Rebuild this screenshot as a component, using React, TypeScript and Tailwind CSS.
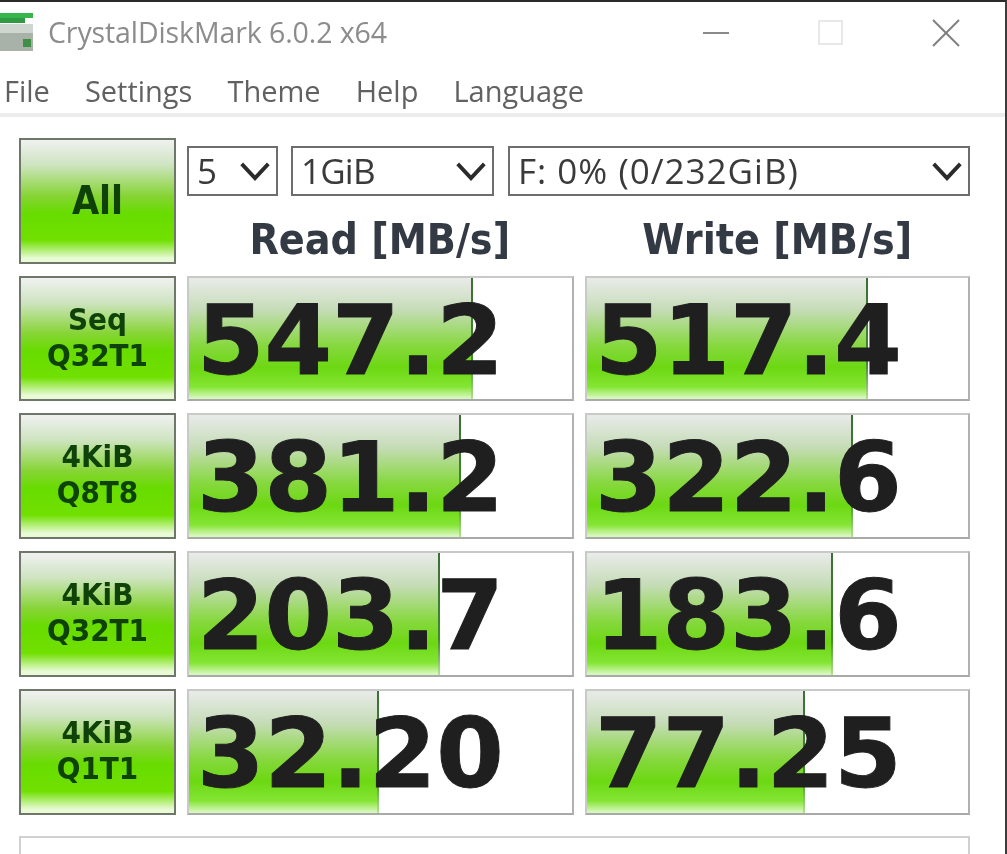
import React from "react";

const menus = ["File", "Settings", "Theme", "Help", "Language"];

const rows = [
  { top: "Seq", bottom: "Q32T1", read: "547.2", readBar: 286, write: "517.4", writeBar: 283 },
  { top: "4KiB", bottom: "Q8T8", read: "381.2", readBar: 274, write: "322.6", writeBar: 268 },
  { top: "4KiB", bottom: "Q32T1", read: "203.7", readBar: 253, write: "183.6", writeBar: 248 },
  { top: "4KiB", bottom: "Q1T1", read: "32.20", readBar: 192, write: "77.25", writeBar: 220 }
];

function Chevron({ className }: { className: string }) {
  return (
    <svg viewBox="0 0 32 20" className={className} fill="none" stroke="#2b2b2b" strokeWidth="4">
      <polyline points="2,2 16,17 30,2" />
    </svg>
  );
}

function Select({ label, className }: { label: string; className: string }) {
  return (
    <div
      className={`flex h-[50px] items-center justify-between border-2 border-[#6d6d6d] pl-2 pr-[5px] text-[35px] text-[#3a3a3a] ${className}`}
    >
      <span className="font-['Open_Sans',sans-serif]">{label}</span>
      <Chevron className="h-[19px] w-[32px]" />
    </div>
  );
}

function GreenButton({ children, big }: { children: React.ReactNode; big?: boolean }) {
  return (
    <div
      className={`flex h-full flex-col items-center justify-center border-2 border-[#6f776b] bg-[linear-gradient(to_bottom,#f0f1f0_0%,#cfe4c2_20%,#86d435_46%,#68dc00_60%,#70e000_82%,#e8fad6_97%)] font-['DejaVu_Sans',sans-serif] font-bold text-[#0e4209] ${
        big ? "text-[39px] [font-stretch:condensed]" : "pb-1 text-[31px] leading-[36px] [font-stretch:condensed]"
      }`}
    >
      {children}
    </div>
  );
}

function Result({ value, bar }: { value: string; bar: number }) {
  return (
    <div className="relative flex h-full items-center overflow-hidden border-2 border-[#c8cac8] border-b-[#a8aaa8] border-r-[#b0b2b0] bg-white pl-[8px] pt-[3px]">
      <div
        className="absolute bottom-0 left-0 top-0 border-r-2 bg-[linear-gradient(to_bottom,#e9ebe9_0%,#c6dcb8_26%,#86d83e_56%,#6cd812_74%,#84e534_90%,#d8f7bd_99%)] [border-image:linear-gradient(to_bottom,#3d6e38,#3f8a2a_70%,#b4e690)_1]"
        style={{ width: bar - 2 }}
      />
      <span className="relative font-['DejaVu_Sans',sans-serif] text-[97px] font-bold leading-none text-[#1f1f1f] [-webkit-text-stroke:1px_#1f1f1f]">
        {value}
      </span>
    </div>
  );
}

export default function App() {
  return (
    <div className="h-[854px] w-[1007px] overflow-hidden border-r-2 border-t-2 border-r-[#3c3c3c] border-t-[#2a2a2a] bg-white blur-[0.7px]">
      {/* Title bar */}
      <div className="flex h-[61px] items-center">
        <svg viewBox="0 0 36 44" className="h-[44px] w-[36px] shrink-0">
          <rect x="0" y="2" width="33" height="5" fill="#35b54c" />
          <rect x="0" y="7" width="25" height="5" fill="#2f9a42" />
          <rect x="0" y="13" width="33" height="9" fill="#cfd5cf" />
          <rect x="0" y="22" width="33" height="18" fill="#a8b2a8" />
          <rect x="23" y="28" width="8" height="8" fill="#3f8f46" />
        </svg>
        <span className="ml-3 font-['Open_Sans',sans-serif] text-[28.5px] tracking-[-0.1px] text-[#8c8c8c]">
          CrystalDiskMark 6.0.2 x64
        </span>
        <div className="ml-auto mr-[45px] flex items-center gap-[89px]">
          <div className="h-[2px] w-[26px] bg-[#8a8a8a]" />
          <div className="h-[25px] w-[25px] border-2 border-[#e8e8e8]" />
          <svg viewBox="0 0 28 28" className="h-[28px] w-[28px]" stroke="#7f7f7f" strokeWidth="2">
            <line x1="1" y1="1" x2="27" y2="27" />
            <line x1="27" y1="1" x2="1" y2="27" />
          </svg>
        </div>
      </div>

      {/* Menu */}
      <div className="flex h-[54px] items-center gap-[35px] border-b-[4px] border-b-[#ececec] pl-[4px] pt-[6px] font-['Open_Sans',sans-serif] text-[29px] text-[#616161]">
        {menus.map((m) => (
          <span key={m}>{m}</span>
        ))}
      </div>

      {/* Measurements */}
      <div className="ml-[19px] mt-[21px] grid w-[951px] grid-cols-[157px_387px_385px] grid-rows-[126px_125px_126px_126px_126px] gap-x-[11px] gap-y-3">
        <GreenButton big>All</GreenButton>
        <div className="col-span-2 flex flex-col pt-2">
          <div className="flex">
            <Select label="5" className="w-[91px]" />
            <Select label="1GiB" className="ml-[13px] w-[203px] tracking-[-0.8px]" />
            <Select label="F: 0% (0/232GiB)" className="ml-[14px] w-[462px] tracking-[1px]" />
          </div>
          <div className="grid grid-cols-2 gap-x-3 pt-[19px] font-['DejaVu_Sans',sans-serif] text-[42.5px] font-bold leading-[50px] text-[#333a44] [font-stretch:condensed]">
            <div className="text-center">Read [MB/s]</div>
            <div className="text-center">Write [MB/s]</div>
          </div>
        </div>

        {rows.map((r) => (
          <React.Fragment key={r.top + r.bottom}>
            <GreenButton>
              <span>{r.top}</span>
              <span>{r.bottom}</span>
            </GreenButton>
            <Result value={r.read} bar={r.readBar} />
            <Result value={r.write} bar={r.writeBar} />
          </React.Fragment>
        ))}
      </div>

      {/* Comment box */}
      <div className="ml-[19px] mt-[21px] h-[60px] w-[951px] border-2 border-[#d0d0d0]" />
    </div>
  );
}
